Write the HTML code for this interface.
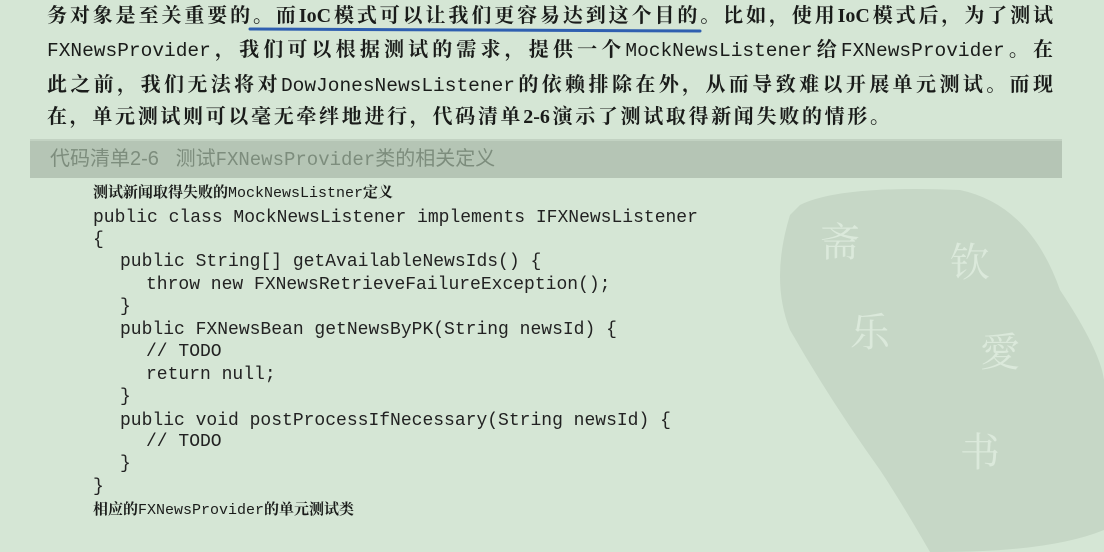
<!DOCTYPE html>
<html><head><meta charset="utf-8"><style>
html,body{margin:0;padding:0;}
body{width:1104px;height:552px;background:#d5e6d5;position:relative;overflow:hidden;font-family:"Liberation Serif","Noto Serif CJK SC",serif;color:#1a1c1a;}
.t{position:absolute;left:47px;width:1006px;font-size:20px;font-weight:bold;white-space:nowrap;text-align:justify;text-align-last:justify;line-height:24px;}
.m{font-family:"Liberation Mono",monospace;font-weight:normal;font-size:19.5px;}
.c{position:absolute;font-family:"Liberation Mono",monospace;font-size:18px;white-space:pre;line-height:22px;color:#222;}
.k{position:absolute;left:93px;font-size:15px;font-weight:bold;white-space:nowrap;line-height:20px;}
.k .m{font-size:15px;}
</style></head><body>
<svg style="position:absolute;left:0;top:0" width="1104" height="552">
<path d="M800 205 Q 840 185 960 190 Q 1030 205 1060 290 Q 1100 350 1104 380 L1104 530 Q 1050 552 940 552 L 930 552 Q 900 500 880 470 Q 830 400 790 330 Q 770 280 790 215 Z" fill="#c6d7c6"/>
<rect x="30" y="139" width="1032" height="39" fill="#b5c5b5"/>
<rect x="30" y="139" width="1032" height="2" fill="#c2d2c2"/>
<path d="M250 29 L700 31" stroke="#2f5fb0" stroke-width="3" fill="none" stroke-linecap="round"/>
</svg>
<div style="position:absolute;left:820px;top:215px;font-size:40px;color:#dbe9db;line-height:50px;font-family:'Noto Serif CJK SC',serif;">
<div style="position:absolute;left:0;top:0">斋</div>
<div style="position:absolute;left:130px;top:20px">钦</div>
<div style="position:absolute;left:30px;top:90px">乐</div>
<div style="position:absolute;left:160px;top:110px">愛</div>
<div style="position:absolute;left:140px;top:210px">书</div>
</div>
<div class="t" style="top:4px">务对象是至关重要的。而IoC模式可以让我们更容易达到这个目的。比如，使用IoC模式后，为了测试</div>
<div class="t" style="top:38px"><span class="m">FXNewsProvider</span>，我们可以根据测试的需求，提供一个<span class="m">MockNewsListener</span>给<span class="m">FXNewsProvider</span>。在</div>
<div class="t" style="top:73px">此之前，我们无法将对<span class="m">DowJonesNewsListener</span>的依赖排除在外，从而导致难以开展单元测试。而现</div>
<div class="t" style="top:105px;width:843px">在，单元测试则可以毫无牵绊地进行，代码清单2-6演示了测试取得新闻失败的情形。</div>
<div style="position:absolute;left:50px;top:147px;font-size:20px;color:#7d8d7d;font-family:'Liberation Sans','Noto Sans CJK SC',sans-serif;white-space:nowrap;line-height:24px;">代码清单2-6&nbsp;&nbsp;&nbsp;测试<span class="m" style="font-size:19px">FXNewsProvider</span>类的相关定义</div>
<div class="k" style="top:183px">测试新闻取得失败的<span class="m">MockNewsListner</span>定义</div>
<div class="c" style="left:93px;top:207px">public class MockNewsListener implements IFXNewsListener</div>
<div class="c" style="left:93px;top:229px">{</div>
<div class="c" style="left:120px;top:251px">public String[] getAvailableNewsIds() {</div>
<div class="c" style="left:146px;top:274px">throw new FXNewsRetrieveFailureException();</div>
<div class="c" style="left:120px;top:296px">}</div>
<div class="c" style="left:120px;top:319px">public FXNewsBean getNewsByPK(String newsId) {</div>
<div class="c" style="left:146px;top:341px">// TODO</div>
<div class="c" style="left:146px;top:364px">return null;</div>
<div class="c" style="left:120px;top:386px">}</div>
<div class="c" style="left:120px;top:410px">public void postProcessIfNecessary(String newsId) {</div>
<div class="c" style="left:146px;top:431px">// TODO</div>
<div class="c" style="left:120px;top:453px">}</div>
<div class="c" style="left:93px;top:476px">}</div>
<div class="k" style="top:500px">相应的<span class="m">FXNewsProvider</span>的单元测试类</div>
</body></html>
